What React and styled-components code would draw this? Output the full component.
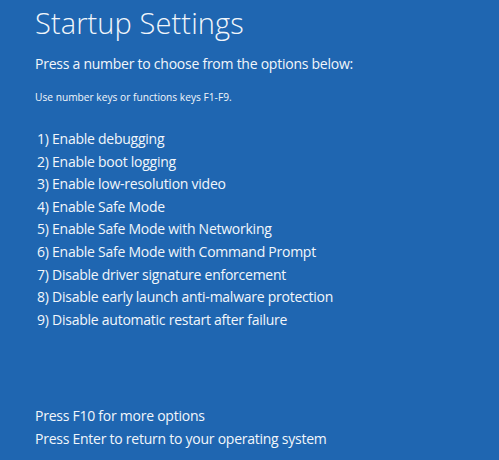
import React from 'react'
import styled, { createGlobalStyle } from 'styled-components'

const Global = createGlobalStyle`
  html, body { margin: 0; padding: 0; background: #1f66b1; }
  body { font-family: "Open Sans", "Noto Sans", sans-serif; color: #f2f6fb; }
`

const Screen = styled.div`
  width: 499px;
  height: 460px;
  box-sizing: border-box;
  padding: 3px 0 0 35px;
  display: flex;
  flex-direction: column;
  overflow: hidden;
`

const Title = styled.h1`
  margin: 0;
  font-size: 29px;
  font-weight: 300;
  line-height: 40px;
  letter-spacing: 0.1px;
`

const Lead = styled.p`
  margin: 11px 0 0;
  font-size: 14px;
  line-height: 20px;
  letter-spacing: -0.25px;
`

const Hint = styled.p`
  margin: 16px 0 0;
  font-size: 10.2px;
  line-height: 14px;
`

const Options = styled.ol`
  list-style: none;
  margin: 24px 0 0;
  padding: 0 0 0 2px;
  display: flex;
  flex-direction: column;
`

const Option = styled.li`
  font-size: 14px;
  line-height: 22.6px;
  letter-spacing: -0.25px;
`

const Footer = styled.div`
  margin-top: auto;
  padding-bottom: 10px;
  display: flex;
  flex-direction: column;
`

const FooterLine = styled.span`
  font-size: 14px;
  line-height: 22.5px;
  letter-spacing: -0.25px;
`

const options = [
  'Enable debugging',
  'Enable boot logging',
  'Enable low-resolution video',
  'Enable Safe Mode',
  'Enable Safe Mode with Networking',
  'Enable Safe Mode with Command Prompt',
  'Disable driver signature enforcement',
  'Disable early launch anti-malware protection',
  'Disable automatic restart after failure',
]

export default function App() {
  return (
    <>
      <Global />
      <Screen>
        <Title>Startup Settings</Title>
        <Lead>Press a number to choose from the options below:</Lead>
        <Hint>Use number keys or functions keys F1-F9.</Hint>
        <Options>
          {options.map((o, i) => (
            <Option key={i}>{i + 1}) {o}</Option>
          ))}
        </Options>
        <Footer>
          <FooterLine>Press F10 for more options</FooterLine>
          <FooterLine>Press Enter to return to your operating system</FooterLine>
        </Footer>
      </Screen>
    </>
  )
}
